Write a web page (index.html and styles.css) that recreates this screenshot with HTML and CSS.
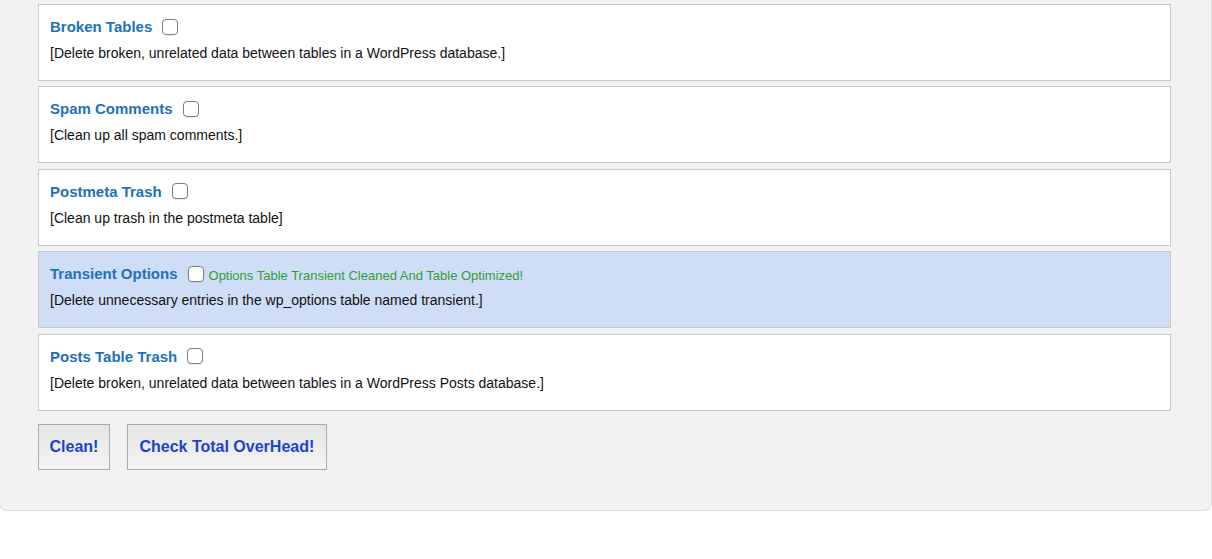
FILE: index.html
```html
<!DOCTYPE html>
<html lang="en">
<head>
<meta charset="utf-8">
<title>Database Cleaner</title>
<link rel="stylesheet" href="styles.css">
</head>
<body>
<div class="panel">
  <div class="list">
    <div class="card">
      <div class="head"><span class="title">Broken Tables</span><input type="checkbox" class="check"></div>
      <div class="desc">[Delete broken, unrelated data between tables in a WordPress database.]</div>
    </div>
    <div class="card">
      <div class="head"><span class="title">Spam Comments</span><input type="checkbox" class="check"></div>
      <div class="desc">[Clean up all spam comments.]</div>
    </div>
    <div class="card">
      <div class="head"><span class="title">Postmeta Trash</span><input type="checkbox" class="check"></div>
      <div class="desc">[Clean up trash in the postmeta table]</div>
    </div>
    <div class="card card-active">
      <div class="head"><span class="title">Transient Options</span><input type="checkbox" class="check"><span class="msg">Options Table Transient Cleaned And Table Optimized!</span></div>
      <div class="desc">[Delete unnecessary entries in the wp_options table named transient.]</div>
    </div>
    <div class="card">
      <div class="head"><span class="title">Posts Table Trash</span><input type="checkbox" class="check"></div>
      <div class="desc">[Delete broken, unrelated data between tables in a WordPress Posts database.]</div>
    </div>
  </div>
  <div class="actions">
    <button class="btn">Clean!</button>
    <button class="btn">Check Total OverHead!</button>
  </div>
</div>
</body>
</html>
```
FILE: styles.css
```css
html, body {
  margin: 0;
  padding: 0;
  background: #ffffff;
  font-family: "Liberation Sans", Arial, Helvetica, sans-serif;
}

.panel {
  box-sizing: border-box;
  width: 1213px;
  margin-left: -1px;
  background: #f2f2f2;
  border: 1px solid #dcdcdc;
  border-top: none;
  border-radius: 0 0 8px 8px;
  padding: 4px 40px 40px 38px;
}

.list {
  display: flex;
  flex-direction: column;
  gap: 5.4px;
}

.card {
  box-sizing: border-box;
  height: 77px;
  background: #ffffff;
  border: 1px solid #c8c8c8;
  padding: 13px 11px 0 11px;
}

.card-active {
  background: #d0ddf6;
}

.head {
  display: flex;
  align-items: center;
  height: 17px;
}

.title {
  font-size: 15px;
  font-weight: bold;
  color: #2271b9;
  line-height: 17px;
  margin-right: 10px;
}

.check {
  appearance: none;
  -webkit-appearance: none;
  box-sizing: border-box;
  width: 16px;
  height: 16px;
  margin: 0;
  background: #ffffff;
  border: 1px solid #7f7f7f;
  border-radius: 4px;
  box-shadow: 0 1px 1px rgba(0, 0, 0, 0.08);
}

.msg {
  margin-left: 5px;
  font-size: 13px;
  color: #2f9f3a;
  line-height: 17px;
  padding-top: 3px;
}

.desc {
  margin-top: 10px;
  font-size: 14px;
  line-height: 16px;
  color: #111111;
}

.actions {
  display: flex;
  gap: 17px;
  margin-top: 13px;
}

.btn {
  box-sizing: border-box;
  height: 46px;
  padding: 0 10.5px;
  font-family: "Liberation Sans", Arial, Helvetica, sans-serif;
  font-size: 16px;
  font-weight: bold;
  line-height: 18px;
  color: #1f42cc;
  background: linear-gradient(#e5e5e5, #f4f4f4);
  border: 1px solid #ababab;
  border-radius: 0;
}

.btn + .btn {
  padding: 0 11.5px;
}
```
